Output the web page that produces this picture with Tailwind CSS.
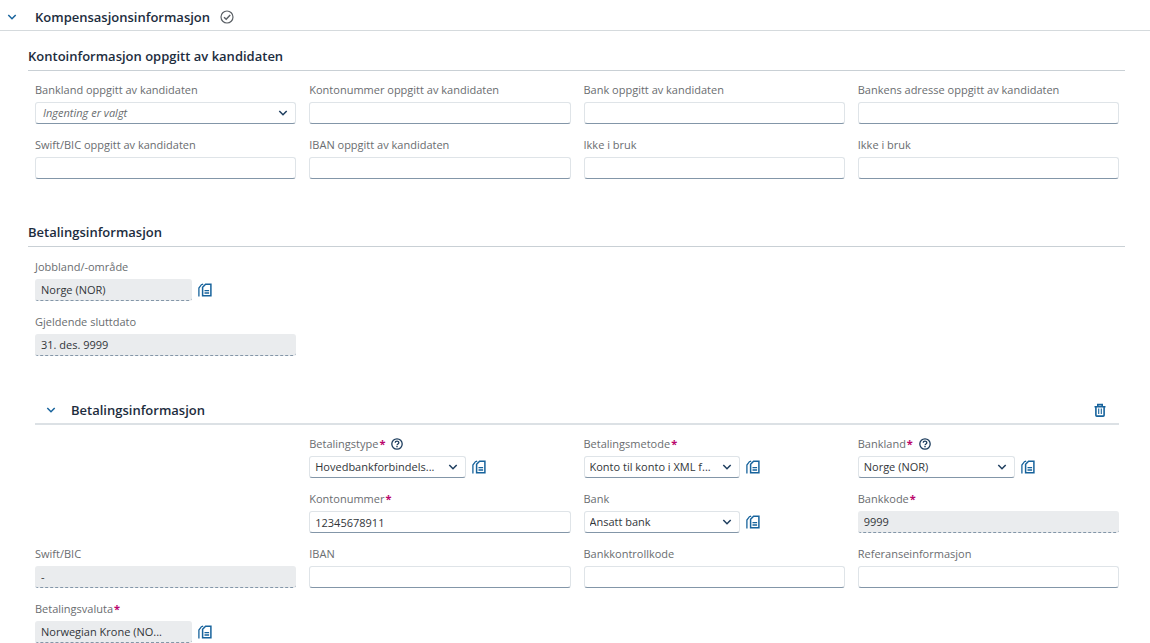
<!DOCTYPE html>
<html lang="nb">
<head>
<meta charset="utf-8">
<meta name="viewport" content="width=device-width, initial-scale=1">
<title>Kompensasjonsinformasjon</title>
<script src="https://cdn.jsdelivr.net/npm/@tailwindcss/browser@4"></script>
</head>
<body class="bg-white font-['Open_Sans','Noto_Sans',sans-serif] text-[11px] leading-4 text-[#32363a]">

<svg class="hidden" aria-hidden="true">
  <symbol id="chevron" viewBox="0 0 10 10"><path d="M1.3 3 5 6.7 8.7 3" fill="none" stroke="currentColor" stroke-width="1.5"/></symbol>
  <symbol id="check" viewBox="0 0 14 14"><circle cx="7" cy="7" r="6" fill="none" stroke="currentColor" stroke-width="1.2"/><path d="M4 7.2 6.2 9.2 10.2 5" fill="none" stroke="currentColor" stroke-width="1.5"/></symbol>
  <symbol id="help" viewBox="0 0 12 12"><circle cx="6" cy="6" r="5.2" fill="none" stroke="currentColor" stroke-width="1.3"/><path d="M4.2 4.8C4.2 2.6 7.8 2.6 7.8 4.7 7.8 6 6 5.9 6 7.3" fill="none" stroke="currentColor" stroke-width="1.3"/><path d="M5.3 8h1.4v1.3H5.3z" fill="currentColor"/></symbol>
  <symbol id="docs" viewBox="0 0 14 14"><path d="M7.6 1.2H12.9V12.8H4.6V4.2Z" fill="none" stroke="currentColor" stroke-width="1.5"/><path d="M5.2 1.1 3.4 1.7.9 5V13.4" fill="none" stroke="currentColor" stroke-width="1.3"/><path d="M6.5 7.6h4.6M6.5 10h4.6" fill="none" stroke="currentColor" stroke-width="1.3"/></symbol>
  <symbol id="trash" viewBox="0 0 12 14"><path d="M.5 3.8h11M3.8 3.6V1.6h4.4v2M1.9 4v8.2q0 .9.9.9h6.4q.9 0 .9-.9V4" fill="none" stroke="currentColor" stroke-width="1.6"/><path d="M4.7 5.6v5.4M7.3 5.6v5.4" fill="none" stroke="currentColor" stroke-width="1.1"/></symbol>
</svg>

<main>
  <header class="flex h-[31px] items-center border-b border-[#d5dadd] pt-1 pl-[7px]">
    <button type="button" aria-label="Skjul Kompensasjonsinformasjon" class="w-7"><svg class="size-[10px] text-[#17639c]"><use href="#chevron"/></svg></button>
    <h1 class="text-[13px] font-semibold text-[#1d2d3e]">Kompensasjonsinformasjon</h1>
    <svg class="ml-[10px] size-[14px] text-[#5b6066]" role="img" aria-label="Fullført"><use href="#check"/></svg>
  </header>

  <section class="mr-[25px] ml-7 pt-[17px]">
    <h2 class="border-b border-[#c9d0d5] pb-[6px] text-[13px] font-semibold text-[#1d2d3e]">Kontoinformasjon oppgitt av kandidaten</h2>
    <div class="grid grid-cols-4 gap-[13px] pt-[11px] pr-[6px] pl-[7px]">
      <div class="flex flex-col gap-1">
        <label for="k1" class="text-[#6a6d70]">Bankland oppgitt av kandidaten</label>
        <div class="relative">
          <select id="k1" class="h-[22px] w-full appearance-none rounded-[3px] border border-[#dfe4e8] border-b-[#8396a8] bg-white pl-[7px] text-[#6a6d70] italic"><option>Ingenting er valgt</option></select>
          <svg class="pointer-events-none absolute top-[6px] right-2 size-[10px] text-[#1d3d5e]"><use href="#chevron"/></svg>
        </div>
      </div>
      <div class="flex flex-col gap-1">
        <label for="k2" class="text-[#6a6d70]">Kontonummer oppgitt av kandidaten</label>
        <input id="k2" type="text" class="h-[22px] w-full rounded-[3px] border border-[#dfe4e8] border-b-[#8396a8] px-[6px]">
      </div>
      <div class="flex flex-col gap-1">
        <label for="k3" class="text-[#6a6d70]">Bank oppgitt av kandidaten</label>
        <input id="k3" type="text" class="h-[22px] w-full rounded-[3px] border border-[#dfe4e8] border-b-[#8396a8] px-[6px]">
      </div>
      <div class="flex flex-col gap-1">
        <label for="k4" class="text-[#6a6d70]">Bankens adresse oppgitt av kandidaten</label>
        <input id="k4" type="text" class="h-[22px] w-full rounded-[3px] border border-[#dfe4e8] border-b-[#8396a8] px-[6px]">
      </div>
      <div class="flex flex-col gap-1">
        <label for="k5" class="text-[#6a6d70]">Swift/BIC oppgitt av kandidaten</label>
        <input id="k5" type="text" class="h-[22px] w-full rounded-[3px] border border-[#dfe4e8] border-b-[#8396a8] px-[6px]">
      </div>
      <div class="flex flex-col gap-1">
        <label for="k6" class="text-[#6a6d70]">IBAN oppgitt av kandidaten</label>
        <input id="k6" type="text" class="h-[22px] w-full rounded-[3px] border border-[#dfe4e8] border-b-[#8396a8] px-[6px]">
      </div>
      <div class="flex flex-col gap-1">
        <label for="k7" class="text-[#6a6d70]">Ikke i bruk</label>
        <input id="k7" type="text" class="h-[22px] w-full rounded-[3px] border border-[#dfe4e8] border-b-[#8396a8] px-[6px]">
      </div>
      <div class="flex flex-col gap-1">
        <label for="k8" class="text-[#6a6d70]">Ikke i bruk</label>
        <input id="k8" type="text" class="h-[22px] w-full rounded-[3px] border border-[#dfe4e8] border-b-[#8396a8] px-[6px]">
      </div>
    </div>
  </section>

  <section class="mr-[25px] ml-7 pt-[45px]">
    <h2 class="border-b border-[#c9d0d5] pb-[6px] text-[13px] font-semibold text-[#1d2d3e]">Betalingsinformasjon</h2>
    <div class="grid grid-cols-4 gap-[13px] pt-3 pr-[6px] pl-[7px]">
      <div class="col-start-1 flex flex-col gap-1">
        <label for="b1" class="text-[#6a6d70]">Jobbland/-område</label>
        <div class="flex items-center gap-[6px]">
          <input id="b1" type="text" readonly value="Norge (NOR)" class="h-[22px] w-3/5 rounded-[3px] border-b border-dashed border-[#8396a8] bg-[#eaecee] px-[6px]">
          <button type="button" aria-label="Historikk for jobbland"><svg class="size-[14px] text-[#17639c]"><use href="#docs"/></svg></button>
        </div>
      </div>
      <div class="col-start-1 flex flex-col gap-1">
        <label for="b2" class="text-[#6a6d70]">Gjeldende sluttdato</label>
        <input id="b2" type="text" readonly value="31. des. 9999" class="h-[22px] w-full rounded-[3px] border-b border-dashed border-[#8396a8] bg-[#eaecee] px-[6px]">
      </div>
    </div>

    <section class="pt-[44px] pr-[6px] pl-[7px]">
      <div class="flex items-center border-b-2 border-[#dce1e5] pb-[3px] pl-[11px]">
        <button type="button" aria-label="Skjul Betalingsinformasjon" class="w-[25px]"><svg class="size-[10px] text-[#17639c]"><use href="#chevron"/></svg></button>
        <h3 class="text-[13px] leading-5 font-semibold text-[#1d2d3e]">Betalingsinformasjon</h3>
        <button type="button" aria-label="Slett" class="mr-[13px] ml-auto"><svg class="h-[14px] w-3 text-[#17639c]"><use href="#trash"/></svg></button>
      </div>
      <div class="grid grid-cols-4 gap-[13px] pt-[11px]">
        <div class="col-start-2 flex flex-col gap-1">
          <div class="flex items-center">
            <label for="p1" class="text-[#6a6d70]">Betalingstype<span class="ml-px font-bold text-[#ba066c]">*</span></label>
            <button type="button" aria-label="Hjelp om betalingstype" class="ml-[6px]"><svg class="size-3 text-[#1d3d5e]"><use href="#help"/></svg></button>
          </div>
          <div class="flex items-center gap-[6px]">
            <div class="relative w-3/5">
              <select id="p1" class="h-[22px] w-full appearance-none rounded-[3px] border border-[#dfe4e8] border-b-[#8396a8] bg-white pl-[5px]"><option>Hovedbankforbindels...</option></select>
              <svg class="pointer-events-none absolute top-[6px] right-2 size-[10px] text-[#1d3d5e]"><use href="#chevron"/></svg>
            </div>
            <button type="button" aria-label="Historikk for betalingstype"><svg class="size-[14px] text-[#17639c]"><use href="#docs"/></svg></button>
          </div>
        </div>
        <div class="flex flex-col gap-1">
          <label for="p2" class="text-[#6a6d70]">Betalingsmetode<span class="ml-px font-bold text-[#ba066c]">*</span></label>
          <div class="flex items-center gap-[6px]">
            <div class="relative w-3/5">
              <select id="p2" class="h-[22px] w-full appearance-none rounded-[3px] border border-[#dfe4e8] border-b-[#8396a8] bg-white pl-[5px]"><option>Konto til konto i XML f...</option></select>
              <svg class="pointer-events-none absolute top-[6px] right-2 size-[10px] text-[#1d3d5e]"><use href="#chevron"/></svg>
            </div>
            <button type="button" aria-label="Historikk for betalingsmetode"><svg class="size-[14px] text-[#17639c]"><use href="#docs"/></svg></button>
          </div>
        </div>
        <div class="flex flex-col gap-1">
          <div class="flex items-center">
            <label for="p3" class="text-[#6a6d70]">Bankland<span class="ml-px font-bold text-[#ba066c]">*</span></label>
            <button type="button" aria-label="Hjelp om bankland" class="ml-[6px]"><svg class="size-3 text-[#1d3d5e]"><use href="#help"/></svg></button>
          </div>
          <div class="flex items-center gap-[6px]">
            <div class="relative w-3/5">
              <select id="p3" class="h-[22px] w-full appearance-none rounded-[3px] border border-[#dfe4e8] border-b-[#8396a8] bg-white pl-[5px]"><option>Norge (NOR)</option></select>
              <svg class="pointer-events-none absolute top-[6px] right-2 size-[10px] text-[#1d3d5e]"><use href="#chevron"/></svg>
            </div>
            <button type="button" aria-label="Historikk for bankland"><svg class="size-[14px] text-[#17639c]"><use href="#docs"/></svg></button>
          </div>
        </div>
        <div class="col-start-2 flex flex-col gap-1">
          <label for="p4" class="text-[#6a6d70]">Kontonummer<span class="ml-px font-bold text-[#ba066c]">*</span></label>
          <input id="p4" type="text" value="12345678911" class="h-[22px] w-full rounded-[3px] border border-[#dfe4e8] border-b-[#8396a8] px-[5px]">
        </div>
        <div class="flex flex-col gap-1">
          <label for="p5" class="text-[#6a6d70]">Bank</label>
          <div class="flex items-center gap-[6px]">
            <div class="relative w-3/5">
              <select id="p5" class="h-[22px] w-full appearance-none rounded-[3px] border border-[#dfe4e8] border-b-[#8396a8] bg-white pl-[5px]"><option>Ansatt bank</option></select>
              <svg class="pointer-events-none absolute top-[6px] right-2 size-[10px] text-[#1d3d5e]"><use href="#chevron"/></svg>
            </div>
            <button type="button" aria-label="Historikk for bank"><svg class="size-[14px] text-[#17639c]"><use href="#docs"/></svg></button>
          </div>
        </div>
        <div class="flex flex-col gap-1">
          <label for="p6" class="text-[#6a6d70]">Bankkode<span class="ml-px font-bold text-[#ba066c]">*</span></label>
          <input id="p6" type="text" readonly value="9999" class="h-[22px] w-full rounded-[3px] border-b border-dashed border-[#8396a8] bg-[#eaecee] px-[6px]">
        </div>
        <div class="flex flex-col gap-1">
          <label for="p7" class="text-[#6a6d70]">Swift/BIC</label>
          <input id="p7" type="text" readonly value="-" class="h-[22px] w-full rounded-[3px] border-b border-dashed border-[#8396a8] bg-[#eaecee] px-[6px]">
        </div>
        <div class="flex flex-col gap-1">
          <label for="p8" class="text-[#6a6d70]">IBAN</label>
          <input id="p8" type="text" class="h-[22px] w-full rounded-[3px] border border-[#dfe4e8] border-b-[#8396a8] px-[5px]">
        </div>
        <div class="flex flex-col gap-1">
          <label for="p9" class="text-[#6a6d70]">Bankkontrollkode</label>
          <input id="p9" type="text" class="h-[22px] w-full rounded-[3px] border border-[#dfe4e8] border-b-[#8396a8] px-[5px]">
        </div>
        <div class="flex flex-col gap-1">
          <label for="p10" class="text-[#6a6d70]">Referanseinformasjon</label>
          <input id="p10" type="text" class="h-[22px] w-full rounded-[3px] border border-[#dfe4e8] border-b-[#8396a8] px-[5px]">
        </div>
        <div class="flex flex-col gap-1">
          <label for="p11" class="text-[#6a6d70]">Betalingsvaluta<span class="ml-px font-bold text-[#ba066c]">*</span></label>
          <div class="flex items-center gap-[6px]">
            <input id="p11" type="text" readonly value="Norwegian Krone (NO..." class="h-[22px] w-3/5 rounded-[3px] border-b border-dashed border-[#8396a8] bg-[#eaecee] px-[6px]">
            <button type="button" aria-label="Historikk for betalingsvaluta"><svg class="size-[14px] text-[#17639c]"><use href="#docs"/></svg></button>
          </div>
        </div>
      </div>
    </section>
  </section>
</main>
</body>
</html>
